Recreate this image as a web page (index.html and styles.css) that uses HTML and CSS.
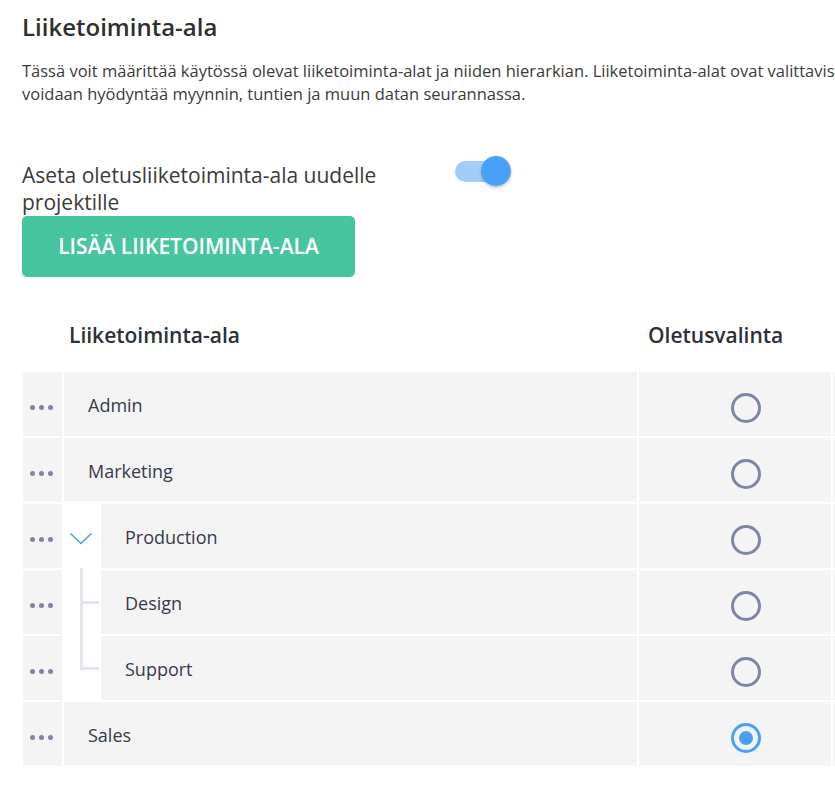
FILE: index.html
```html
<!DOCTYPE html>
<html lang="fi">
<head>
	<meta charset="UTF-8">
	<meta name="viewport" content="width=device-width, initial-scale=1.0">
	<title>Liiketoiminta-ala</title>
	<link rel="stylesheet" href="styles.css">
</head>
<body>
	<div class="page">
		<h1>Liiketoiminta-ala</h1>
		<p class="intro">Tässä voit määrittää käytössä olevat liiketoiminta-alat ja niiden hierarkian. Liiketoiminta-alat ovat valittavissa projekteille ja niitä<br>voidaan hyödyntää myynnin, tuntien ja muun datan seurannassa.</p>

		<div class="setting">
			<div class="setting__label">Aseta oletusliiketoiminta-ala uudelle projektille</div>
			<div class="toggle toggle--on">
				<span class="toggle__track"></span>
				<span class="toggle__thumb"></span>
			</div>
		</div>

		<button class="btn-add">LISÄÄ LIIKETOIMINTA-ALA</button>

		<div class="table">
			<div class="table__head">
				<div class="th th--name">Liiketoiminta-ala</div>
				<div class="th th--default">Oletusvalinta</div>
				<div class="th"></div>
			</div>

			<div class="row">
				<div class="cell cell--dots"><span class="dots"><i></i><i></i><i></i></span></div>
				<div class="cell cell--name"><span class="name">Admin</span></div>
				<div class="cell cell--radio"><span class="radio"></span></div>
				<div class="cell"></div>
			</div>
			<div class="row">
				<div class="cell cell--dots"><span class="dots"><i></i><i></i><i></i></span></div>
				<div class="cell cell--name"><span class="name">Marketing</span></div>
				<div class="cell cell--radio"><span class="radio"></span></div>
				<div class="cell"></div>
			</div>
			<div class="row row--child">
				<div class="cell cell--dots"><span class="dots"><i></i><i></i><i></i></span></div>
				<div class="cell cell--name">
					<div class="tree">
						<svg class="chevron" width="24" height="13" viewBox="0 0 24 13"><polyline points="1.5,1.5 12,11.5 22.5,1.5" fill="none" stroke="#4aa0f8" stroke-width="1.6"/></svg>
					</div>
					<span class="name">Production</span>
				</div>
				<div class="cell cell--radio"><span class="radio"></span></div>
				<div class="cell"></div>
			</div>
			<div class="row row--child">
				<div class="cell cell--dots"><span class="dots"><i></i><i></i><i></i></span></div>
				<div class="cell cell--name">
					<div class="tree tree--mid"></div>
					<span class="name">Design</span>
				</div>
				<div class="cell cell--radio"><span class="radio"></span></div>
				<div class="cell"></div>
			</div>
			<div class="row row--child">
				<div class="cell cell--dots"><span class="dots"><i></i><i></i><i></i></span></div>
				<div class="cell cell--name">
					<div class="tree tree--last"></div>
					<span class="name">Support</span>
				</div>
				<div class="cell cell--radio"><span class="radio"></span></div>
				<div class="cell"></div>
			</div>
			<div class="row">
				<div class="cell cell--dots"><span class="dots"><i></i><i></i><i></i></span></div>
				<div class="cell cell--name"><span class="name">Sales</span></div>
				<div class="cell cell--radio"><span class="radio radio--checked"></span></div>
				<div class="cell"></div>
			</div>
		</div>
	</div>
</body>
</html>
```

FILE: styles.css
```css
html, body {
	overflow: hidden;
}
body {
	margin: 0;
	font-family: "Open Sans", sans-serif;
	color: #333;
	background: #fff;
}
.page {
	padding: 11px 0 0 22px;
	width: 1100px;
}
h1 {
	font-size: 24px;
	font-weight: 600;
	line-height: 32px;
	margin: 0;
	color: #2f2f2f;
}
.intro {
	font-size: 16.5px;
	line-height: 23px;
	margin: 16px 0 0;
	color: #3b3b3b;
	white-space: nowrap;
}

/* toggle setting */
.setting {
	display: flex;
	align-items: flex-start;
	margin-top: 51px;
}
.setting__label {
	width: 400px;
	margin-top: 6px;
	margin-right: 33px;
	font-size: 21px;
	line-height: 27px;
	color: #3a3a3a;
}
.toggle {
	position: relative;
	width: 56px;
	height: 30px;
}
.toggle__track {
	position: absolute;
	left: 0;
	top: 5px;
	width: 46px;
	height: 21px;
	border-radius: 11px;
	background: #a3cdf8;
}
.toggle__thumb {
	position: absolute;
	left: 26px;
	top: 0;
	width: 30px;
	height: 30px;
	border-radius: 50%;
	background: #4aa0f8;
	box-shadow: 0 2px 3px rgba(0, 0, 0, .22);
}

.btn-add {
	display: block;
	width: 333px;
	height: 61px;
	margin: 0;
	padding: 0;
	border: none;
	border-radius: 5px;
	background: #47c59f;
	color: #fff;
	font-family: "Open Sans", sans-serif;
	font-size: 21px;
	font-weight: 600;
	line-height: 61px;
	text-align: center;
}

/* table */
.table {
	margin: 44px 0 0 1px;
}
.table__head,
.row {
	display: grid;
	grid-template-columns: 39px 573px 192px 100px;
	column-gap: 2px;
}
.th {
	font-size: 21px;
	font-weight: 600;
	line-height: 28px;
	color: #2d3038;
	padding-bottom: 23px;
}
.th--name {
	grid-column: span 2;
	padding-left: 46px;
}
.th--default {
	padding-left: 9px;
}
.row {
	height: 64px;
	margin-bottom: 2px;
}
.cell {
	display: flex;
	align-items: center;
	background: #f4f4f4;
}
.cell--dots {
	padding: 7px 0 0 7px;
}
.dots {
	display: flex;
	gap: 4px;
}
.dots i {
	width: 5px;
	height: 5px;
	border-radius: 50%;
	background: #7e86a3;
}
.cell--name {
	padding-left: 24px;
}
.name {
	font-size: 18px;
	padding-top: 2px;
	color: #363b4b;
}
.row--child .cell--name {
	padding-left: 0;
	background: transparent;
	align-items: stretch;
}
.row--child .name {
	flex: 1;
	display: flex;
	align-items: center;
	padding-left: 24px;
	background: #f4f4f4;
}
.tree {
	position: relative;
	width: 37px;
	flex: none;
	background: #fff;
}
.chevron {
	position: absolute;
	left: 5px;
	top: 28px;
}
.tree--mid::before,
.tree--last::before {
	content: "";
	position: absolute;
	left: 16px;
	top: -2px;
	width: 3px;
	background: #e4e6eb;
}
.tree--mid::before {
	bottom: -2px;
}
.tree--last::before {
	height: 35px;
}
.tree--mid::after,
.tree--last::after {
	content: "";
	position: absolute;
	left: 16px;
	top: 31px;
	width: 19px;
	height: 3px;
	background: #e4e6eb;
}
.cell--radio {
	padding: 8px 0 0 92px;
}
.radio {
	display: flex;
	align-items: center;
	justify-content: center;
	box-sizing: border-box;
	width: 30px;
	height: 30px;
	border: 3px solid #7e86a3;
	border-radius: 50%;
}
.radio--checked {
	border-color: #4aa0f8;
}
.radio--checked::after {
	content: "";
	width: 14px;
	height: 14px;
	border-radius: 50%;
	background: #4aa0f8;
}
```
